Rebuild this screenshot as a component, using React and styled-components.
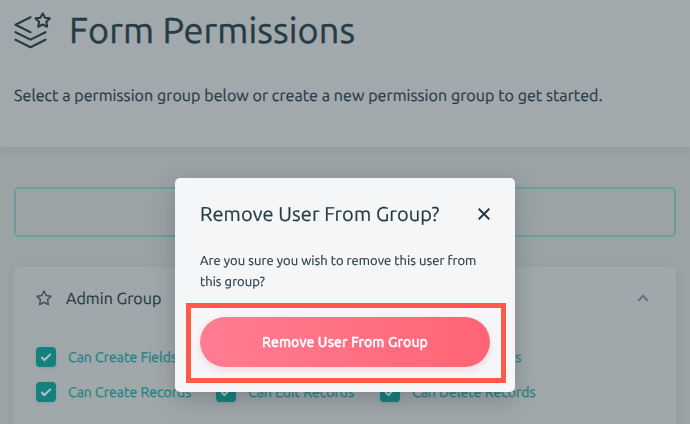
import React from "react";
import styled, { createGlobalStyle } from "styled-components";

const GlobalStyle = createGlobalStyle`
  *, *::before, *::after { box-sizing: border-box; }
  body {
    margin: 0;
    overflow: hidden;
    font-family: Ubuntu, "Noto Sans", sans-serif;
    color: #253b46;
    background: #9ba3a5;
    text-rendering: geometricPrecision;
  }
  h1, h2, h3, p { margin: 0; font-weight: 400; white-space: nowrap; }
  button { font: inherit; border: 0; padding: 0; }
  svg { display: block; flex: none; }
`;

const Page = styled.div`
  height: 424px;
  overflow: hidden;
`;

const Header = styled.header`
  height: 147px;
  padding: 11px 14px 0;
  background: #a2a9ac;
  box-shadow: 0 2px 10px rgba(40, 60, 65, 0.1);
`;

const TitleRow = styled.div`
  display: flex;
  gap: 18px;
  height: 40px;
`;

const Title = styled.h1`
  font-size: 36px;
  line-height: 38px;
  letter-spacing: 0.12px;
  -webkit-text-stroke: 0.4px currentColor;
`;

const Intro = styled.p`
  margin-top: 33px;
  font-size: 16px;
  line-height: 24px;
  letter-spacing: 0.08px;
  -webkit-text-stroke: 0.2px currentColor;
`;

const Content = styled.main`
  display: flex;
  flex-direction: column;
  gap: 30px;
  padding: 40px 14px 0;
`;

const NewGroupButton = styled.button`
  width: 662px;
  height: 50px;
  border: 2px solid #66a09e;
  border-radius: 5px;
  background: transparent;
`;

const GroupCard = styled.section`
  width: 662px;
  height: 200px;
  padding: 15px 27px 0 22px;
  border-radius: 5px;
  background: #a1a8ab;
  box-shadow: 0 2px 10px rgba(40, 60, 65, 0.07);
`;

const GroupHeader = styled.div`
  display: flex;
  align-items: center;
  height: 32px;
`;

const GroupName = styled.h3`
  flex: 1;
  margin-left: 14px;
  padding-top: 2px;
  font-size: 16px;
  line-height: 24px;
  letter-spacing: 0.05px;
  -webkit-text-stroke: 0.2px currentColor;
`;

const PermissionGrid = styled.div`
  display: grid;
  grid-template-columns: 180px 164px 1fr;
  grid-auto-rows: 20px;
  row-gap: 15px;
  margin-top: 33px;
`;

const Permission = styled.div`
  display: flex;
  align-items: center;
  gap: 12px;
  color: #1f8482;
  font-size: 14px;
  line-height: 20px;
  letter-spacing: 0.03px;
  white-space: nowrap;
  -webkit-text-stroke: 0.3px currentColor;
`;

const CheckBox = styled.span`
  display: flex;
  align-items: center;
  justify-content: center;
  width: 20px;
  height: 20px;
  border-radius: 4px;
  background: #13817e;
  box-shadow: 0 1px 4px rgba(20, 90, 90, 0.15);
`;

const Overlay = styled.div`
  position: fixed;
  inset: 0;
  padding: 178px 175px 0;
`;

const Dialog = styled.div`
  width: 340px;
  height: 214px;
  padding: 23px 25px 0;
  border-radius: 5px;
  background: #f5f6f8;
  box-shadow: 0 8px 24px rgba(35, 50, 55, 0.28);
`;

const DialogHeader = styled.div`
  display: flex;
  align-items: center;
  justify-content: space-between;
  height: 26px;
`;

const DialogTitle = styled.h2`
  font-size: 20px;
  line-height: 26px;
  letter-spacing: 0.08px;
  -webkit-text-stroke: 0.2px currentColor;
`;

const CloseButton = styled.button`
  width: 12px;
  height: 12px;
  background: transparent;
  color: #253b46;
`;

const Message = styled.p`
  margin-top: 24px;
  font-size: 13px;
  line-height: 21px;
  letter-spacing: 0.06px;
  -webkit-text-stroke: 0.2px currentColor;
`;

const Highlight = styled.div`
  width: 320px;
  height: 80px;
  margin: 10px 0 0 -14px;
  padding: 9px;
  border: 5px solid #ff5a49;
`;

const RemoveButton = styled.button`
  display: block;
  width: 290px;
  height: 50px;
  border-radius: 25px;
  color: #fff;
  background: linear-gradient(90deg, #ff7c92, #ff6475);
  box-shadow: 0 3px 7px rgba(255, 100, 120, 0.2);
  font-size: 14px;
  font-weight: 500;
  line-height: 20px;
  letter-spacing: 0.1px;
  -webkit-text-stroke: 0.35px currentColor;
`;

const LayersIcon = () => (
  <svg width="37" height="38" viewBox="0 0 37 38" fill="none" stroke="#253b46" strokeWidth="2.1" strokeLinecap="round" strokeLinejoin="round">
    <path d="M16.5 6.2 1.5 13.7 16.5 21.2" />
    <path d="M1.5 21.2 16.5 28.6 31.5 21.2" />
    <path d="M1.5 28.7 16.5 36.2 31.5 28.7" />
    <path d="M28.7 2.4 31 6.7 35.8 7.4 32.3 10.8 33.2 15.8 28.7 13.5 24.2 15.8 25.1 10.8 21.6 7.4 26.4 6.7Z" />
  </svg>
);

const StarIcon = () => (
  <svg width="16" height="16" viewBox="0 0 20 20" fill="none" stroke="#46555b" strokeWidth="1.9" strokeLinejoin="round">
    <path d="M10 1.2 12.7 6.8 18.9 7.7 14.4 12 15.5 18.2 10 15.3 4.5 18.2 5.6 12 1.1 7.7 7.3 6.8Z" />
  </svg>
);

const CheckIcon = () => (
  <svg width="12" height="10" viewBox="0 0 12 10" fill="none" stroke="#b5c2c4" strokeWidth="2">
    <path d="M1.3 5.1 4.4 8 10.8 1.9" />
  </svg>
);

const permissions = [
  "Can Create Fields",
  "Can Edit Fields",
  "Can Delete Fields",
  "Can Create Records",
  "Can Edit Records",
  "Can Delete Records",
];

export default function App() {
  return (
    <>
      <GlobalStyle />
      <Page>
        <Header>
          <TitleRow>
            <LayersIcon />
            <Title>Form Permissions</Title>
          </TitleRow>
          <Intro>Select a permission group below or create a new permission group to get started.</Intro>
        </Header>
        <Content>
          <NewGroupButton />
          <GroupCard>
            <GroupHeader>
              <StarIcon />
              <GroupName>Admin Group</GroupName>
              <svg width="12" height="8" viewBox="0 0 12 8" fill="none" stroke="#68757a" strokeWidth="2.3">
                <path d="M1.3 6.7 6 1.8 10.7 6.7" />
              </svg>
            </GroupHeader>
            <PermissionGrid>
              {permissions.map((name) => (
                <Permission key={name}>
                  <CheckBox><CheckIcon /></CheckBox>
                  {name}
                </Permission>
              ))}
            </PermissionGrid>
          </GroupCard>
        </Content>
      </Page>
      <Overlay>
        <Dialog>
          <DialogHeader>
            <DialogTitle>Remove User From Group?</DialogTitle>
            <CloseButton aria-label="Close">
              <svg width="12" height="12" viewBox="0 0 12 12" fill="none" stroke="currentColor" strokeWidth="2">
                <path d="M.7.7 11.3 11.3M11.3.7.7 11.3" />
              </svg>
            </CloseButton>
          </DialogHeader>
          <Message>
            Are you sure you wish to remove this user from
            <br />
            this group?
          </Message>
          <Highlight>
            <RemoveButton>Remove User From Group</RemoveButton>
          </Highlight>
        </Dialog>
      </Overlay>
    </>
  );
}
